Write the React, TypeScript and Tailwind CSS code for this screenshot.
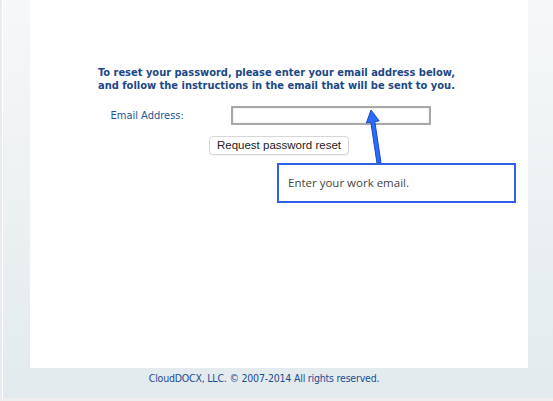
import React from "react";

export default function App() {
  return (
    <div className="relative w-[553px] h-[401px] overflow-hidden flex flex-col bg-gradient-to-b from-[#f6f8f9] to-[#e2eaed]">
      <div className="flex flex-1">
        <div className="w-[2px] bg-[#e9ecee]" />
        <div className="w-[1px] bg-white" />
        <div className="flex flex-col flex-1">
          <div className="ml-[27px] w-[498px] h-[368px] bg-white flex flex-col items-center pt-[66px]">
            <p
              className="text-[#1b4887] font-bold text-[11px] leading-[13px] text-center ml-[-5px]"
              style={{ fontFamily: '"DejaVu Sans Condensed", Tahoma, "DejaVu Sans", sans-serif' }}
            >
              To reset your password, please enter your email address below,
              <br />
              and follow the instructions in the email that will be sent to you.
            </p>
            <div className="flex items-center mt-[14px] ml-[-17px]">
              <span
                className="text-[#265593] text-[11px] w-[120px] pt-[1px]"
                style={{ fontFamily: '"DejaVu Sans Condensed", Tahoma, "DejaVu Sans", sans-serif' }}
              >
                Email Address:
              </span>
              <div className="w-[200px] h-[19px] border-[2px] border-[#a8a8a8] bg-white shadow-[inset_0_0_1px_#999]" />
            </div>
            <button
              className="mt-[11px] h-[19px] px-[7px] rounded-[4px] border border-[#d6d6d6] bg-white text-[#222] text-[11.5px] leading-[17px] shadow-[0_1px_1px_rgba(0,0,0,0.05)]"
              style={{ fontFamily: '"Liberation Sans", Arial, sans-serif' }}
            >
              Request password reset
            </button>
          </div>
          <div
            className="ml-[27px] w-[498px] pr-[30px] text-center text-[#1d4c8f] text-[10.5px] tracking-[-0.2px] mt-[3px]"
            style={{ fontFamily: '"DejaVu Sans Condensed", Tahoma, "DejaVu Sans", sans-serif' }}
          >
            CloudDOCX, LLC. © 2007-2014 All rights reserved.
          </div>
        </div>
      </div>
      <div className="h-[3px] bg-[#eeeeee]" />

      <svg className="absolute left-0 top-0" width="553" height="401">
        <polygon
          points="371,110 379.2,120.9 374.8,121.6 381,162.7 377,163.3 370.8,122.2 366.4,122.9"
          fill="#2a6cff"
          stroke="#1848c8"
          strokeWidth="1"
          strokeLinejoin="round"
        />
      </svg>
      <div className="absolute left-[277px] top-[163px] w-[239px] h-[40px] border-[2px] border-[#2f5fe6] bg-white flex items-center pl-[9px]">
        <span
          className="text-[#444] text-[11.5px]"
          style={{ fontFamily: '"Open Sans", Lato, sans-serif' }}
        >
          Enter your work email.
        </span>
      </div>
    </div>
  );
}
